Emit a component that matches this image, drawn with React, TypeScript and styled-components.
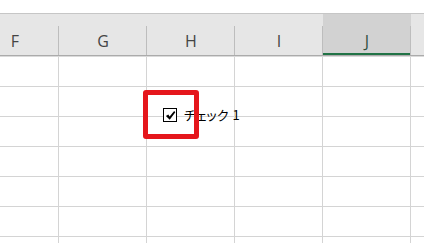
import React from 'react';
import styled, { createGlobalStyle } from 'styled-components';

const COLUMNS = ['F', 'G', 'H', 'I', 'J', ''];
const SELECTED = 'J';
const ROW_COUNT = 7;

const GlobalStyle = createGlobalStyle`
    html, body {
        margin: 0;
        padding: 0;
        background: #ffffff;
        overflow: hidden;
    }
`;

const App = () => {
    const rows = Array.from({ length: ROW_COUNT }, (_, i) => i);

    return (
        <Page>
            <GlobalStyle />
            <Ribbon />
            <Sheet>
                <HeaderRow>
                    {COLUMNS.map((col, i) => (
                        <HeaderCell key={i} selected={col === SELECTED}>
                            {col}
                        </HeaderCell>
                    ))}
                </HeaderRow>
                <Body>
                    {rows.map((r) => (
                        <Row key={r}>
                            {COLUMNS.map((_, i) => (
                                <Cell key={i} />
                            ))}
                        </Row>
                    ))}
                </Body>
            </Sheet>
            <FormCheck>
                <CheckBox>
                    <svg width="11" height="11" viewBox="0 0 10 10">
                        <path d="M0.8 5.4 L3 4.1 L4.2 5.9 L8.3 1 L9.4 2 L4.3 8.8 Z" fill="#000" />
                    </svg>
                </CheckBox>
                <CheckLabel>
                    チェック<Gap />1
                </CheckLabel>
            </FormCheck>
            <Highlight />
        </Page>
    );
};

const Page = styled.div`
    position: relative;
    width: 424px;
    height: 243px;
    overflow: hidden;
    background: #ffffff;
`;

const Ribbon = styled.div`
    height: 13px;
    border-bottom: 1px solid #c6c6c6;
    background: #ffffff;
`;

const Sheet = styled.div`
    margin-left: -29px;
    display: flex;
    flex-direction: column;
`;

const HeaderRow = styled.div`
    display: flex;
    height: 41px;
    border-bottom: 1px solid #ababab;
    background: #e6e6e6;
`;

const HeaderCell = styled.div<{ selected?: boolean }>`
    position: relative;
    flex: 0 0 88px;
    box-sizing: border-box;
    padding-top: 12px;
    display: flex;
    align-items: center;
    justify-content: center;
    font-family: "Open Sans", "Liberation Sans", sans-serif;
    font-size: 16px;
    color: ${(p) => (p.selected ? '#2f4f3f' : '#444444')};
    background: ${(p) => (p.selected ? '#d2d2d2' : '#e6e6e6')};
    box-shadow: ${(p) => (p.selected ? 'inset 0 -2px 0 #217346' : 'none')};

    &::after {
        content: "";
        position: absolute;
        right: 0;
        top: 12px;
        bottom: 0;
        width: 1px;
        background: #bdbdbd;
    }
`;

const Body = styled.div`
    border-top: 1px solid #dadada;
    display: flex;
    flex-direction: column;
`;

const Row = styled.div`
    display: flex;
    height: 30px;
    box-sizing: border-box;
    border-bottom: 1px solid #d4d4d4;
`;

const Cell = styled.div`
    flex: 0 0 88px;
    box-sizing: border-box;
    border-right: 1px solid #d4d4d4;
`;

const FormCheck = styled.div`
    position: absolute;
    left: 163px;
    top: 107px;
    display: flex;
    align-items: center;
    gap: 7px;
`;

const CheckBox = styled.div`
    width: 14px;
    height: 14px;
    box-sizing: border-box;
    border: 1px solid #000000;
    background: #ffffff;
    display: flex;
    align-items: center;
    justify-content: center;
`;

const CheckLabel = styled.span`
    display: flex;
    align-items: center;
    font-family: "Noto Sans CJK JP", sans-serif;
    font-size: 13px;
    font-feature-settings: "palt";
    color: #000000;
    line-height: 16px;
`;

const Gap = styled.span`
    display: inline-block;
    width: 4px;
`;

const Highlight = styled.div`
    position: absolute;
    left: 143px;
    top: 90px;
    width: 56px;
    height: 49px;
    box-sizing: border-box;
    border: 5px solid #e5161c;
    border-radius: 3px;
`;

export default App;
